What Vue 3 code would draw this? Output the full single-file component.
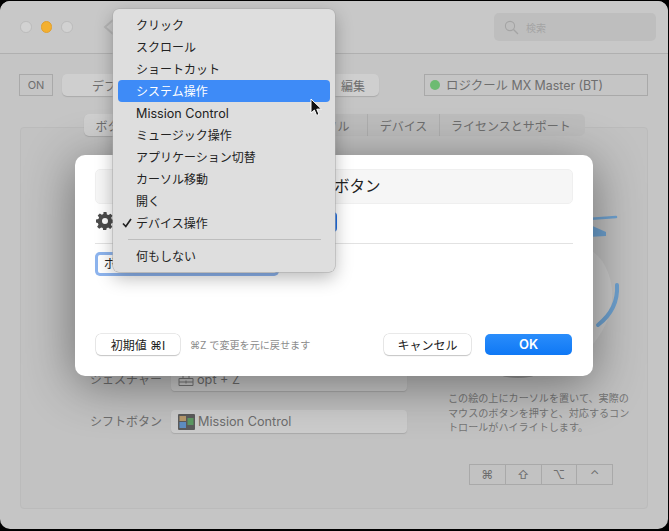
<template>
  <div class="window">
    <header class="titlebar">
      <div class="lights">
        <span class="light"></span>
        <span class="light orange"></span>
        <span class="light"></span>
      </div>
      <svg class="back" width="12" height="16" viewBox="0 0 12 16"><path d="M10 1 L2 8 L10 15" fill="none" stroke="#b4b4b4" stroke-width="2"/></svg>
      <div class="search">
        <svg width="15" height="15" viewBox="0 0 15 15"><circle cx="6" cy="6" r="4.6" fill="none" stroke="#a4a4a4" stroke-width="1.1"/><path d="M9.5 9.5 L14 14" stroke="#a4a4a4" stroke-width="1.3"/></svg>
        <span>検索</span>
      </div>
    </header>

    <div class="toolbar">
      <div class="on">ON</div>
      <div class="preset">
        <span class="preset-name">デフォルト</span>
        <span class="preset-edit">編集</span>
      </div>
      <div class="device"><i class="dot"></i>ロジクール MX Master (BT)</div>
    </div>

    <div class="tabs-wrap">
      <nav class="tabs">
        <span v-for="t in tabs" :key="t.label" class="tab" :class="{ active: t.active }" :style="{ width: t.width + 'px' }">{{ t.label }}</span>
      </nav>
    </div>

    <section class="panel">
      <div class="form">
        <div class="row">
          <label>ジェスチャー</label>
          <div class="field">
            <svg width="16" height="13" viewBox="0 0 16 13"><path d="M1 5.5h14v7H1zM5 5.5v-4h6v4M1 9h14M8 7.5v3" fill="none" stroke="#777" stroke-width="1"/></svg>
            opt + Z
          </div>
        </div>
        <div class="row">
          <label>シフトボタン</label>
          <div class="field">
            <svg width="17" height="16" viewBox="0 0 17 16">
              <rect width="17" height="16" rx="1" fill="#5c5c5c"/>
              <rect x="1.5" y="2" width="6.5" height="5" fill="#b89a6c"/>
              <rect x="1.5" y="8" width="6.5" height="6" fill="#5f8fc4"/>
              <rect x="9.5" y="4" width="6" height="7" fill="#5d9a63"/>
            </svg>
            Mission Control
          </div>
        </div>
      </div>
      <aside class="side">
        <svg class="mouse" width="200" height="250" viewBox="0 0 200 250">
          <path d="M60 100 C110 88 160 98 176 125 C190 150 186 180 165 205 C130 240 85 240 60 210Z" fill="#cbcbcb"/>
          <ellipse cx="90" cy="236" rx="16" ry="3" fill="#666" opacity="0.45"/>
          <path d="M189 146 C190 162 184 175 170 186" fill="none" stroke="#6fa3d2" stroke-width="4" stroke-linecap="round"/>
          <path d="M160 80 L188 78" stroke="#6fa3d2" stroke-width="2.5" stroke-linecap="round"/>
          <path d="M160 85 L178 93 L178 97 L160 98Z" fill="#6fa3d2"/>
        </svg>
        <p class="help">この絵の上にカーソルを置いて、実際のマウスのボタンを押すと、対応するコントロールがハイライトします。</p>
        <div class="keys">
          <span v-for="k in keys" :key="k">{{ k }}</span>
        </div>
      </aside>
    </section>

    <div class="modal">
      <div class="name">サイドボタン</div>
      <div class="action-row">
        <svg class="gear" width="18" height="18" viewBox="0 0 18 18">
          <path fill="#4c4c4c" fill-rule="evenodd" d="M7.5 0h3l.4 2.4 1.6.7 2-1.4 2.1 2.1-1.4 2 .7 1.6 2.1.4v3l-2.4.4-.7 1.6 1.4 2-2.1 2.1-2-1.4-1.6.7-.4 2.3h-3l-.4-2.4-1.6-.7-2 1.4-2.1-2.1 1.4-2-.7-1.6L0 10.5v-3l2.4-.4.7-1.6-1.4-2 2.1-2.1 2 1.4 1.6-.7zM9 6a3 3 0 1 0 0 6 3 3 0 0 0 0-6z"/>
        </svg>
        <div class="popup"></div>
      </div>
      <div class="focus-input">ボタン</div>
      <div class="modal-foot">
        <button class="btn reset">初期値 ⌘I</button>
        <span class="hint">⌘Z で変更を元に戻せます</span>
        <button class="btn cancel">キャンセル</button>
        <button class="btn ok">OK</button>
      </div>
    </div>

    <ul class="menu">
      <template v-for="item in menuItems" :key="item.label">
        <li v-if="item.sep" class="sep"></li>
        <li class="item" :class="{ hot: item.hot, latin: item.latin }">
          <svg v-if="item.checked" class="check" width="10" height="10" viewBox="0 0 10 10"><path d="M1 5.5 L3.8 8.5 L9 1" fill="none" stroke="#222" stroke-width="1.7"/></svg>
          {{ item.label }}
        </li>
      </template>
    </ul>

    <svg class="cursor" width="13" height="19" viewBox="0 0 13 19">
      <path d="M1 1 L1 15 L4.4 12 L6.6 17.4 L9 16.4 L6.8 11.2 L11.4 11 Z" fill="#111" stroke="#fff" stroke-width="1"/>
    </svg>
  </div>
</template>

<script setup>
const tabs = [
  { label: 'ボタン', width: 60, active: true },
  { label: 'スクロール', width: 140 },
  { label: 'カーソル', width: 84 },
  { label: 'デバイス', width: 72 },
  { label: 'ライセンスとサポート', width: 145 }
]

const keys = ['⌘', '⇧', '⌥', '⌃']

const menuItems = [
  { label: 'クリック' },
  { label: 'スクロール' },
  { label: 'ショートカット' },
  { label: 'システム操作', hot: true },
  { label: 'Mission Control', latin: true },
  { label: 'ミュージック操作' },
  { label: 'アプリケーション切替' },
  { label: 'カーソル移動' },
  { label: '開く' },
  { label: 'デバイス操作', checked: true },
  { label: '何もしない', sep: true }
]
</script>

<style>
html, body {
  margin: 0;
  background: #000;
}
</style>

<style scoped>
.window {
  position: relative;
  width: 668px;
  height: 528px;
  margin-top: 1px;
  background: #c5c5c5;
  border-radius: 10px;
  overflow: hidden;
  font-family: Inter, "Noto Sans CJK JP", sans-serif;
  font-size: 12px;
  color: #6e6e6e;
}

.titlebar {
  display: flex;
  align-items: center;
  height: 53px;
  padding: 0 12px 0 20px;
  box-sizing: border-box;
  border-bottom: 1px solid #b0b0b0;
  background: #c8c8c8;
}
.lights {
  display: flex;
  gap: 9px;
}
.light {
  width: 11.5px;
  height: 11.5px;
  border-radius: 50%;
  background: #d2d2d2;
  border: 0.5px solid #bbb;
  box-sizing: border-box;
}
.light.orange {
  background: #f4b02f;
  border-color: #e0a030;
}
.back {
  margin-left: 30px;
}
.search {
  display: flex;
  align-items: center;
  gap: 7px;
  width: 162px;
  height: 28px;
  margin-left: auto;
  padding-left: 10px;
  box-sizing: border-box;
  border-radius: 5px;
  background: #bebebe;
  font-size: 10px;
  color: #a4a4a4;
}

.toolbar {
  display: flex;
  align-items: stretch;
  height: 22px;
  margin-top: 20px;
  padding-left: 19px;
}
.on {
  display: flex;
  align-items: center;
  justify-content: center;
  width: 34px;
  box-sizing: border-box;
  border: 1px solid #a9a9a9;
  font-size: 11px;
}
.preset {
  display: flex;
  align-items: center;
  justify-content: space-between;
  width: 317px;
  margin-left: 9px;
  padding: 0 14px 0 30px;
  box-sizing: border-box;
  border-radius: 5px;
  background: #cfcfcf;
  box-shadow: 0 1px 1px #aaa;
}
.device {
  display: flex;
  align-items: center;
  width: 224px;
  margin-left: 45px;
  padding-left: 5px;
  box-sizing: border-box;
  border: 1px solid #a9a9a9;
  font-size: 12.4px;
  white-space: nowrap;
}
.dot {
  width: 10px;
  height: 10px;
  margin-right: 6px;
  border-radius: 50%;
  background: #6dbb72;
}

.tabs-wrap {
  position: relative;
  display: flex;
  margin-top: 18px;
  padding-left: 84px;
}
.tabs {
  display: flex;
  height: 22px;
  border-radius: 5px;
  background: #bdbdbd;
}
.tab {
  display: flex;
  align-items: center;
  justify-content: center;
  border-right: 1px solid #aeaeae;
  box-sizing: border-box;
  white-space: nowrap;
}
.tab:last-child {
  padding-right: 3px;
  border-right: 0;
}
.tab.active {
  border-radius: 5px;
  background: #cfcfcf;
  box-shadow: 0 1px 1px #aaa;
}

.panel {
  display: flex;
  height: 382px;
  margin: -9px 20px 0;
  box-sizing: border-box;
  border: 1px solid #bbb;
  border-radius: 4px;
  background: #c2c2c2;
}
.form {
  display: flex;
  flex-direction: column;
  gap: 19px;
  flex: none;
  width: 386px;
  padding-top: 240px;
  box-sizing: border-box;
}
.row {
  display: flex;
  align-items: center;
  justify-content: flex-end;
  gap: 9px;
}
.row label {
  margin-top: -2px;
  white-space: nowrap;
}
.field {
  display: flex;
  align-items: center;
  gap: 3px;
  width: 236px;
  height: 23px;
  padding-left: 7px;
  box-sizing: border-box;
  border-radius: 4px;
  background: #cdcdcd;
  box-shadow: 0 1px 1px #aaa;
  font-size: 12.7px;
}
.side {
  position: relative;
  padding-left: 41px;
}
.mouse {
  position: absolute;
  top: 11px;
  left: 21px;
}
.help {
  position: relative;
  width: 186px;
  margin: 0;
  padding-top: 263px;
  font-size: 10.1px;
  line-height: 14.5px;
  color: #757575;
}
.keys {
  display: flex;
  width: 144px;
  height: 21px;
  margin: 29px 0 0 21px;
  box-sizing: border-box;
  border: 1px solid #a9a9a9;
}
.keys span {
  flex: 1;
  text-align: center;
  line-height: 19px;
  border-right: 1px solid #a9a9a9;
}
.keys span:last-child {
  border-right: 0;
}

.modal {
  position: absolute;
  z-index: 2;
  top: 154px;
  left: 75px;
  width: 518px;
  height: 221px;
  padding: 14px 20px 0;
  box-sizing: border-box;
  border-radius: 10px;
  background: #fff;
  box-shadow: 0 8px 50px rgba(0, 0, 0, 0.45);
  color: #222;
}
.name {
  height: 35px;
  line-height: 33px;
  text-align: center;
  font-size: 15.5px;
  border: 1px solid #efefef;
  border-radius: 5px;
  box-sizing: border-box;
  background: #f6f6f6;
}
.action-row {
  display: flex;
  align-items: center;
  height: 39px;
  border-bottom: 1px solid #e2e2e2;
}
.gear {
  margin-left: 1px;
  margin-top: -6px;
}
.popup {
  width: 180px;
  height: 20px;
  margin: -4px 0 0 43px;
  border-radius: 4px;
  background: #1f6fe5;
}
.focus-input {
  width: 178px;
  height: 18px;
  margin: 11px 0 0 3px;
  padding-left: 6px;
  box-sizing: border-box;
  line-height: 18px;
  border-radius: 2px;
  box-shadow: 0 0 0 3px #8db4ee;
  font-size: 12px;
}
.modal-foot {
  display: flex;
  align-items: center;
  height: 22px;
  margin-top: 60px;
}
.btn {
  height: 21px;
  padding: 0;
  border: 0;
  border-radius: 5px;
  background: #fff;
  box-shadow: 0 0 0 0.5px #d4d4d4, 0 1px 1px #bbb;
  font: inherit;
  font-size: 12px;
  color: #222;
}
.reset {
  width: 84px;
  margin-left: 1px;
}
.hint {
  margin-left: 10px;
  font-size: 10.1px;
  color: #8b8b8b;
}
.cancel {
  width: 87px;
  margin-left: auto;
}
.ok {
  width: 87px;
  margin-left: 14px;
  margin-right: 1px;
  background: linear-gradient(#2a8dfb, #0f78f5);
  box-shadow: none;
  color: #fff;
  font-size: 13px;
  font-weight: 600;
}

.menu {
  position: absolute;
  z-index: 3;
  top: 8px;
  left: 113px;
  width: 222px;
  margin: 0;
  padding: 5px;
  box-sizing: border-box;
  list-style: none;
  border-radius: 6px;
  background: #dedede;
  box-shadow: 0 0 0 0.5px #a8a8a8, 0 6px 18px rgba(0, 0, 0, 0.28);
  color: #222;
}
.item {
  position: relative;
  height: 22px;
  padding-left: 18px;
  line-height: 24px;
  border-radius: 4px;
  white-space: nowrap;
}
.item.latin {
  font-size: 12.6px;
}
.item.hot {
  background: #3e8bf7;
  color: #fff;
}
.check {
  position: absolute;
  top: 6px;
  left: 4px;
}
.sep {
  height: 1px;
  margin: 5px 9px 5px 10px;
  background: #bdbdbd;
}
.cursor {
  position: absolute;
  z-index: 4;
  top: 97px;
  left: 310px;
}
</style>
